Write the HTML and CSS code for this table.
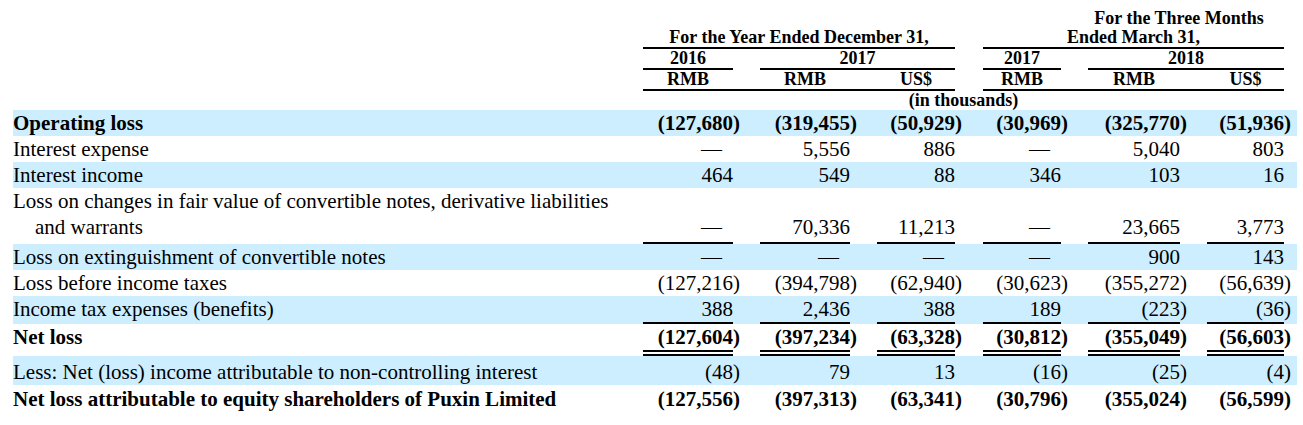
FILE: index.html
```html
<!DOCTYPE html>
<html>
<head>
<meta charset="utf-8">
<link rel="stylesheet" href="styles.css">
</head>
<body>
<div class="wrap">
<table class="fin">
<colgroup>
<col class="w-lbl"><col class="w-c90"><col class="w-g27"><col class="w-c90"><col class="w-g27"><col class="w-c78"><col class="w-g28"><col class="w-c78"><col class="w-g27"><col class="w-c92"><col class="w-g27"><col class="w-c77"><col class="w-tail">
</colgroup>
<thead>
<tr class="h">
<th></th><th colspan="6"></th><th></th><th colspan="5" class="hc">For the Three Months</th><th></th>
</tr>
<tr class="h">
<th></th><th colspan="5" class="hc u">For the Year Ended December 31,</th><th></th><th colspan="5" class="hc u">Ended March 31,</th><th></th>
</tr>
<tr class="h">
<th></th><th class="hc u">2016</th><th></th><th colspan="3" class="hc u">2017</th><th></th><th class="hc u">2017</th><th></th><th colspan="3" class="hc u">2018</th><th></th>
</tr>
<tr class="h">
<th></th><th class="hc u">RMB</th><th class="u"></th><th class="hc u">RMB</th><th class="u"></th><th class="hc u">US$</th><th></th><th class="hc u">RMB</th><th class="u"></th><th class="hc u">RMB</th><th class="u"></th><th class="hc u">US$</th><th></th>
</tr>
<tr class="h">
<th></th><th colspan="11" class="hc">(in thousands)</th><th></th>
</tr>
</thead>
<tbody>
<tr class="band b">
<td class="lbl">Operating loss</td>
<td class="n">(127,680</td><td class="p">)</td>
<td class="n">(319,455</td><td class="p">)</td>
<td class="n">(50,929</td><td class="p">)</td>
<td class="n">(30,969</td><td class="p">)</td>
<td class="n">(325,770</td><td class="p">)</td>
<td class="n">(51,936</td><td class="p">)</td>
</tr>
<tr>
<td class="lbl">Interest expense</td>
<td class="n d">—</td><td class="p"></td>
<td class="n">5,556</td><td class="p"></td>
<td class="n">886</td><td class="p"></td>
<td class="n d">—</td><td class="p"></td>
<td class="n">5,040</td><td class="p"></td>
<td class="n">803</td><td class="p"></td>
</tr>
<tr class="band">
<td class="lbl">Interest income</td>
<td class="n">464</td><td class="p"></td>
<td class="n">549</td><td class="p"></td>
<td class="n">88</td><td class="p"></td>
<td class="n">346</td><td class="p"></td>
<td class="n">103</td><td class="p"></td>
<td class="n">16</td><td class="p"></td>
</tr>
<tr class="ul pad">
<td class="lbl">Loss on changes in fair value of convertible notes, derivative liabilities<br>and warrants</td>
<td class="n d u">—</td><td class="p"></td>
<td class="n u">70,336</td><td class="p"></td>
<td class="n u">11,213</td><td class="p"></td>
<td class="n d u">—</td><td class="p"></td>
<td class="n u">23,665</td><td class="p"></td>
<td class="n u">3,773</td><td class="p"></td>
</tr>
<tr class="band">
<td class="lbl">Loss on extinguishment of convertible notes</td>
<td class="n d">—</td><td class="p"></td>
<td class="n d">—</td><td class="p"></td>
<td class="n d">—</td><td class="p"></td>
<td class="n d">—</td><td class="p"></td>
<td class="n">900</td><td class="p"></td>
<td class="n">143</td><td class="p"></td>
</tr>
<tr>
<td class="lbl">Loss before income taxes</td>
<td class="n">(127,216</td><td class="p">)</td>
<td class="n">(394,798</td><td class="p">)</td>
<td class="n">(62,940</td><td class="p">)</td>
<td class="n">(30,623</td><td class="p">)</td>
<td class="n">(355,272</td><td class="p">)</td>
<td class="n">(56,639</td><td class="p">)</td>
</tr>
<tr class="band ul">
<td class="lbl">Income tax expenses (benefits)</td>
<td class="n u">388</td><td class="p"></td>
<td class="n u">2,436</td><td class="p"></td>
<td class="n u">388</td><td class="p"></td>
<td class="n u">189</td><td class="p"></td>
<td class="n u">(223</td><td class="p">)</td>
<td class="n u">(36</td><td class="p">)</td>
</tr>
<tr class="b dbl">
<td class="lbl">Net loss</td>
<td class="n u2">(127,604</td><td class="p">)</td>
<td class="n u2">(397,234</td><td class="p">)</td>
<td class="n u2">(63,328</td><td class="p">)</td>
<td class="n u2">(30,812</td><td class="p">)</td>
<td class="n u2">(355,049</td><td class="p">)</td>
<td class="n u2">(56,603</td><td class="p">)</td>
</tr>
<tr class="band less">
<td class="lbl">Less: Net (loss) income attributable to non-controlling interest</td>
<td class="n">(48</td><td class="p">)</td>
<td class="n">79</td><td class="p"></td>
<td class="n">13</td><td class="p"></td>
<td class="n">(16</td><td class="p">)</td>
<td class="n">(25</td><td class="p">)</td>
<td class="n">(4</td><td class="p">)</td>
</tr>
<tr class="b last">
<td class="lbl">Net loss attributable to equity shareholders of Puxin Limited</td>
<td class="n">(127,556</td><td class="p">)</td>
<td class="n">(397,313</td><td class="p">)</td>
<td class="n">(63,341</td><td class="p">)</td>
<td class="n">(30,796</td><td class="p">)</td>
<td class="n">(355,024</td><td class="p">)</td>
<td class="n">(56,599</td><td class="p">)</td>
</tr>
</tbody>
</table>
</div>
</body>
</html>
```

FILE: styles.css
```css
html, body {
  margin: 0;
  padding: 0;
  background: #ffffff;
}

.wrap {
  padding: 9px 0 0 13px;
}

.fin {
  table-layout: fixed;
  width: 1284px;
  border-collapse: separate;
  border-spacing: 0;
  font-family: "Liberation Serif", "Times New Roman", serif;
  color: #000;
}

.w-lbl { width: 630px; }
.w-c90 { width: 90px; }
.w-g27 { width: 27px; }
.w-g28 { width: 28px; }
.w-c78 { width: 78px; }
.w-c92 { width: 92px; }
.w-c77 { width: 77px; }
.w-tail { width: 13px; }

.fin th {
  padding: 0;
  font-size: 18px;
  line-height: 19px;
  font-weight: bold;
  white-space: nowrap;
  vertical-align: bottom;
}

.fin th.hc {
  text-align: center;
}

.fin th.u {
  border-bottom: 2px solid #000;
}

.fin td {
  padding: 0;
  font-size: 21px;
  line-height: 26px;
  white-space: nowrap;
  vertical-align: bottom;
}

.fin tr.band td {
  background: #cceeff;
}

.fin tr.b td {
  font-weight: bold;
}

.fin td.lbl {
  text-align: left;
  padding-left: 22px;
  text-indent: -22px;
}

.fin td.n {
  text-align: right;
}

.fin td.d {
  padding-right: 11px;
}

.fin td.p {
  text-align: left;
}

/* single underline rows */
.fin tr.ul td {
  padding-bottom: 2px;
}

.fin tr.ul.pad td {
  padding-bottom: 4px;
}

.fin tr.ul td.u {
  padding-bottom: 0;
  border-bottom: 2px solid #000;
}

.fin tr.ul.pad td.u {
  padding-bottom: 2px;
}

/* double underline row */
.fin tr.dbl td {
  padding-bottom: 6px;
}

.fin tr.dbl td.u2 {
  padding-bottom: 0;
  border-bottom: 6px double #000;
}

.fin tr.less td {
  padding-top: 3px;
}

.fin tr.last td {
  padding-top: 1px;
}
```
